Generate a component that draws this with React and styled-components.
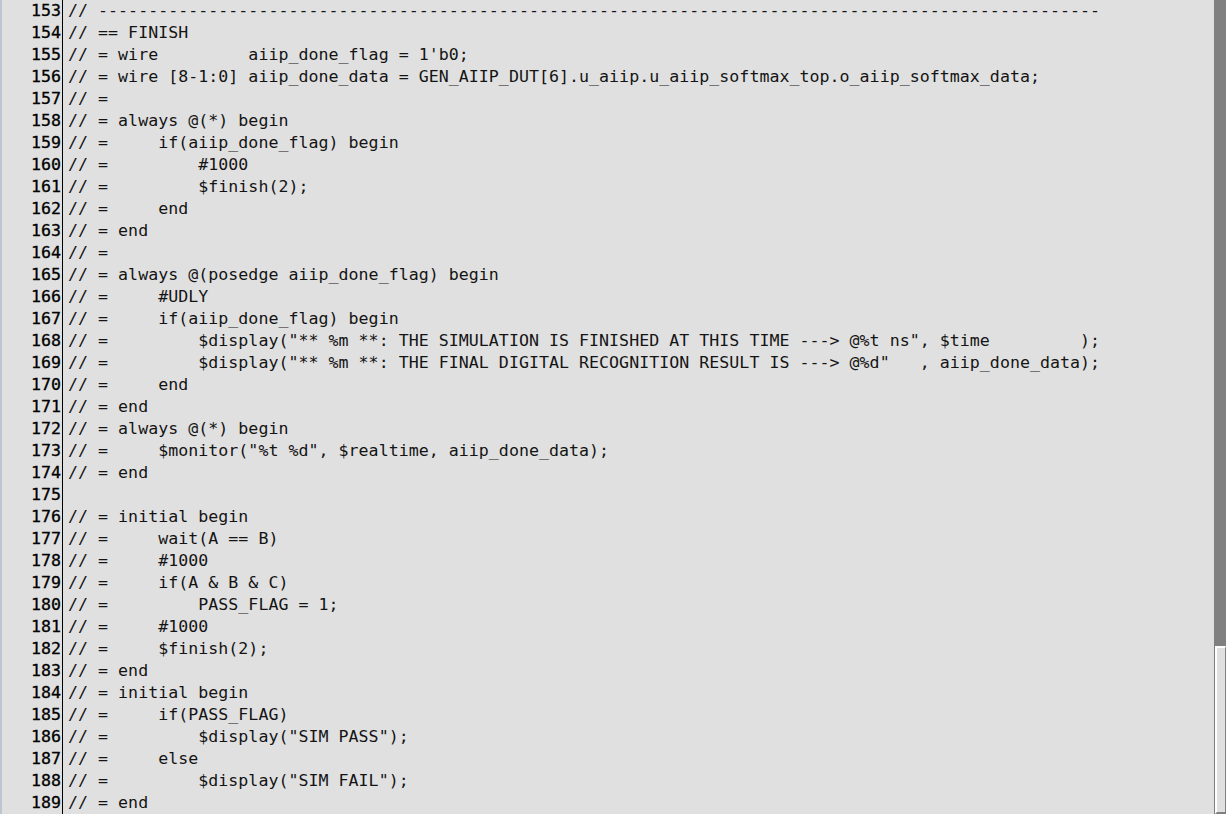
import React from "react";
import styled, { createGlobalStyle } from "styled-components";

const Global = createGlobalStyle`
  html, body { margin: 0; padding: 0; background: #e0e0e0; overflow: hidden; }
  #root { width: 1226px; height: 814px; }
`;

const Window = styled.div`
  display: flex;
  width: 1226px;
  height: 814px;
  background: #e0e0e0;
  overflow: hidden;
`;

const Edge = styled.div`
  width: 2px;
  background: #bcc6d2;
  flex: none;
`;

const Buffer = styled.div`
  flex: 1;
  display: flex;
  flex-direction: column;
  min-width: 0;
`;

const Line = styled.div`
  display: grid;
  grid-template-columns: 61px 1fr;
  height: 22px;
  font-family: "DejaVu Sans Mono", "Liberation Mono", monospace;
  font-size: 16.6px;
  letter-spacing: 0.03px;
  line-height: 22px;
  color: #141414;
  white-space: pre;
`;

const Num = styled.div`
  text-align: right;
  padding-right: 1px;
  border-right: 1px solid #000;
  color: #000;
  font-weight: 400;
  -webkit-text-stroke: 0.3px #000;
`;

const Code = styled.div`
  padding-left: 5px;
  overflow: hidden;
`;

const Scrollbar = styled.div`
  width: 12px;
  flex: none;
  display: flex;
  flex-direction: column;
  background: #808080;
`;

const Track = styled.div`
  flex: 1;
`;

const Thumb = styled.div`
  height: 168px;
  margin-left: 1px;
  background: #e0e0e0;
  border-top: 2px solid #ffffff;
  border-left: 2px solid #ffffff;
  border-right: 1px solid #808080;
  border-bottom: 2px solid #808080;
  box-sizing: border-box;
`;

const lines = [
  "// " + "-".repeat(100),
  "// == FINISH",
  "// = wire         aiip_done_flag = 1'b0;",
  "// = wire [8-1:0] aiip_done_data = GEN_AIIP_DUT[6].u_aiip.u_aiip_softmax_top.o_aiip_softmax_data;",
  "// =",
  "// = always @(*) begin",
  "// =     if(aiip_done_flag) begin",
  "// =         #1000",
  "// =         $finish(2);",
  "// =     end",
  "// = end",
  "// =",
  "// = always @(posedge aiip_done_flag) begin",
  "// =     #UDLY",
  "// =     if(aiip_done_flag) begin",
  '// =         $display("** %m **: THE SIMULATION IS FINISHED AT THIS TIME ---> @%t ns", $time         );',
  '// =         $display("** %m **: THE FINAL DIGITAL RECOGNITION RESULT IS ---> @%d"   , aiip_done_data);',
  "// =     end",
  "// = end",
  "// = always @(*) begin",
  '// =     $monitor("%t %d", $realtime, aiip_done_data);',
  "// = end",
  "",
  "// = initial begin",
  "// =     wait(A == B)",
  "// =     #1000",
  "// =     if(A & B & C)",
  "// =         PASS_FLAG = 1;",
  "// =     #1000",
  "// =     $finish(2);",
  "// = end",
  "// = initial begin",
  "// =     if(PASS_FLAG)",
  '// =         $display("SIM PASS");',
  "// =     else",
  '// =         $display("SIM FAIL");',
  "// = end",
];

export default function App() {
  return (
    <>
      <Global />
      <Window>
        <Edge />
        <Buffer>
          {lines.map((text, i) => (
            <Line key={i}>
              <Num>{153 + i}</Num>
              <Code>{text}</Code>
            </Line>
          ))}
        </Buffer>
        <Scrollbar>
          <Track />
          <Thumb />
        </Scrollbar>
      </Window>
    </>
  );
}
